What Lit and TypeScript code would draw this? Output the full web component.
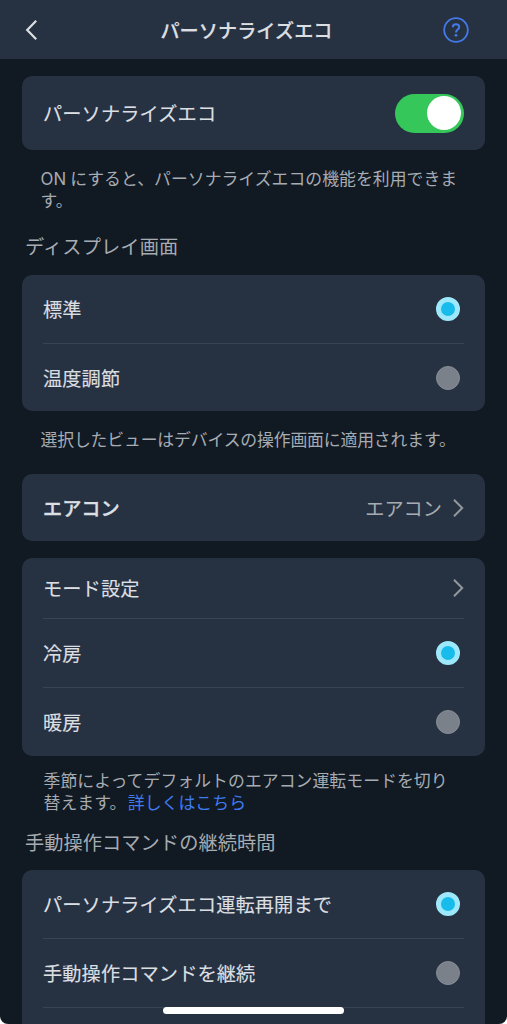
import { LitElement, html, css, nothing } from "lit";
import { customElement, property } from "lit/decorators.js";

@customElement("radio-mark")
class RadioMark extends LitElement {
  @property({ type: Boolean }) on = false;
  static styles = css`
    :host { display: block; width: 24px; height: 24px; margin-right: 4px; }
    .ring { box-sizing: border-box; width: 24px; height: 24px; border-radius: 50%; background: #7b818b; border: 1px solid #868b94; }
    .ring.on { background: #17bbec; border: 5px solid #9ee8fb; }
  `;
  render() {
    return html`<div class="ring ${this.on ? "on" : ""}"></div>`;
  }
}

@customElement("setting-row")
class SettingRow extends LitElement {
  @property() label = "";
  @property() value = "";
  @property() kind = "off";
  static styles = css`
    :host { display: flex; align-items: center; justify-content: space-between; box-sizing: border-box; }
    .label { font-size: 19.2px; line-height: 28px; font-weight: 400; letter-spacing: 0.12px; -webkit-text-stroke: 0.15px #dcdfe2; color: #dcdfe2; white-space: nowrap; }
    .label.strong { font-weight: 500; -webkit-text-stroke-width: 0.35px; letter-spacing: 0; }
    .end { display: flex; align-items: center; }
    .value { font-size: 19.2px; line-height: 28px; color: #a6acb2; margin-right: 10px; }
    .chevron { display: block; }
    .switch { box-sizing: border-box; width: 69px; height: 39px; padding: 2.5px 3px; border-radius: 20px; background: #35c759; display: flex; justify-content: flex-end; }
    .knob { width: 34px; height: 34px; border-radius: 50%; background: #fff; }
  `;
  private renderEnd() {
    if (this.kind === "switch") return html`<div class="switch"><div class="knob"></div></div>`;
    if (this.kind === "link")
      return html`<svg class="chevron" width="12" height="20" viewBox="0 0 12 20" fill="none" stroke="#92969d" stroke-width="2">
        <path d="M2 1.8 L10.2 10 L2 18.2" />
      </svg>`;
    return html`<radio-mark ?on=${this.kind === "on"}></radio-mark>`;
  }
  render() {
    return html`<span class="label ${this.value ? "strong" : ""}">${this.label}</span>
      <div class="end">
        ${this.value ? html`<span class="value">${this.value}</span>` : nothing}${this.renderEnd()}
      </div>`;
  }
}

@customElement("app-root")
class AppRoot extends LitElement {
  static styles = css`
    :host { display: block; height: 1024px; background: #fff; font-family: "Noto Sans CJK JP", "Noto Sans", sans-serif; }
    .screen { position: relative; height: 1024px; overflow: hidden; background: #111923; border-radius: 0 0 8px 8px; }
    .bar { display: grid; grid-template-columns: 60px 1fr 60px; align-items: center; height: 59px; background: #263241; }
    .back { display: block; margin-left: 25px; }
    .title { margin: 0; padding-right: 14px; text-align: center; font-size: 19.2px; line-height: 28px; font-weight: 500; -webkit-text-stroke: 0.2px #dcdfe2; color: #dcdfe2; }
    .help { display: block; justify-self: end; margin-right: 38px; }
    .body { padding: 17px 22px 0; }
    .card { background: #263241; border-radius: 10px; padding: 0 21px; }
    .card setting-row { height: 67.8px; }
    .card setting-row + setting-row { border-top: 1px solid #384452; height: 68.6px; }
    .card.single setting-row { height: 67.3px; }
    .card.main setting-row { height: 74px; }
    .card.modes setting-row:first-child { height: 60.2px; }
    .card.modes setting-row + setting-row { height: 68.7px; }
    .card.hold setting-row + setting-row { height: 68.8px; }
    .note { margin: 0; font-family: "Inter", "Noto Sans CJK JP", sans-serif; font-size: 16.85px; line-height: 22px; color: #a6acb2; }
    .latin { margin-right: 4px; }
    .usage { padding: 18px 20px 0 18.5px; white-space: nowrap; letter-spacing: 0.03px; }
    .view { padding: 18px 0 0 18.5px; white-space: nowrap; letter-spacing: -0.15px; }
    .season { padding: 14.4px 20px 0 21.5px; white-space: nowrap; letter-spacing: 0.05px; }
    .link { margin-left: 1.5px; color: #3f7bee; }
    .heading { margin: 0; padding-left: 3px; font-size: 19.2px; line-height: 28px; font-weight: 400; letter-spacing: 0.08px; color: #a6acb2; }
    .display { padding-top: 20px; padding-bottom: 15px; letter-spacing: 0.15px; }
    .manual { padding-top: 13.6px; padding-bottom: 14.8px; }
    .single { margin: 22.6px 0 16.7px; }
    .home { position: absolute; left: 163px; bottom: 10px; width: 181px; height: 7px; border-radius: 4px; background: #fff; }
  `;
  render() {
    return html`
      <div class="screen">
        <header class="bar">
          <svg class="back" width="13" height="20" viewBox="0 0 13 20" fill="none" stroke="#dcdfe2" stroke-width="2.2">
            <path d="M11.2 0.8 L2.2 10 L11.2 19.2" />
          </svg>
          <h1 class="title">パーソナライズエコ</h1>
          <svg class="help" width="26" height="26" viewBox="0 0 26 26" fill="none" stroke="#4479ea">
            <circle cx="13" cy="13" r="11.8" stroke-width="1.8" />
            <path d="M9.8 10.2 C9.8 8.2 11 7.2 13 7.2 C15 7.2 16.2 8.3 16.2 10.1 C16.2 12.6 13 12.6 13 15.6" stroke-width="2" />
            <circle cx="13" cy="18.3" r="1.4" fill="#4479ea" stroke="none" />
          </svg>
        </header>
        <main class="body">
          <section class="card main"><setting-row label="パーソナライズエコ" kind="switch"></setting-row></section>
          <p class="note usage"><span class="latin">ON</span>にすると、パーソナライズエコの機能を利用できま<br />す。</p>
          <h2 class="heading display">ディスプレイ画面</h2>
          <section class="card">
            <setting-row label="標準" kind="on"></setting-row>
            <setting-row label="温度調節"></setting-row>
          </section>
          <p class="note view">選択したビューはデバイスの操作画面に適用されます。</p>
          <section class="card single"><setting-row label="エアコン" value="エアコン" kind="link"></setting-row></section>
          <section class="card modes">
            <setting-row label="モード設定" kind="link"></setting-row>
            <setting-row label="冷房" kind="on"></setting-row>
            <setting-row label="暖房"></setting-row>
          </section>
          <p class="note season">季節によってデフォルトのエアコン運転モードを切り<br />替えます。<span class="link">詳しくはこちら</span></p>
          <h2 class="heading manual">手動操作コマンドの継続時間</h2>
          <section class="card hold">
            <setting-row label="パーソナライズエコ運転再開まで" kind="on"></setting-row>
            <setting-row label="手動操作コマンドを継続"></setting-row>
            <setting-row></setting-row>
          </section>
        </main>
        <div class="home"></div>
      </div>
    `;
  }
}
